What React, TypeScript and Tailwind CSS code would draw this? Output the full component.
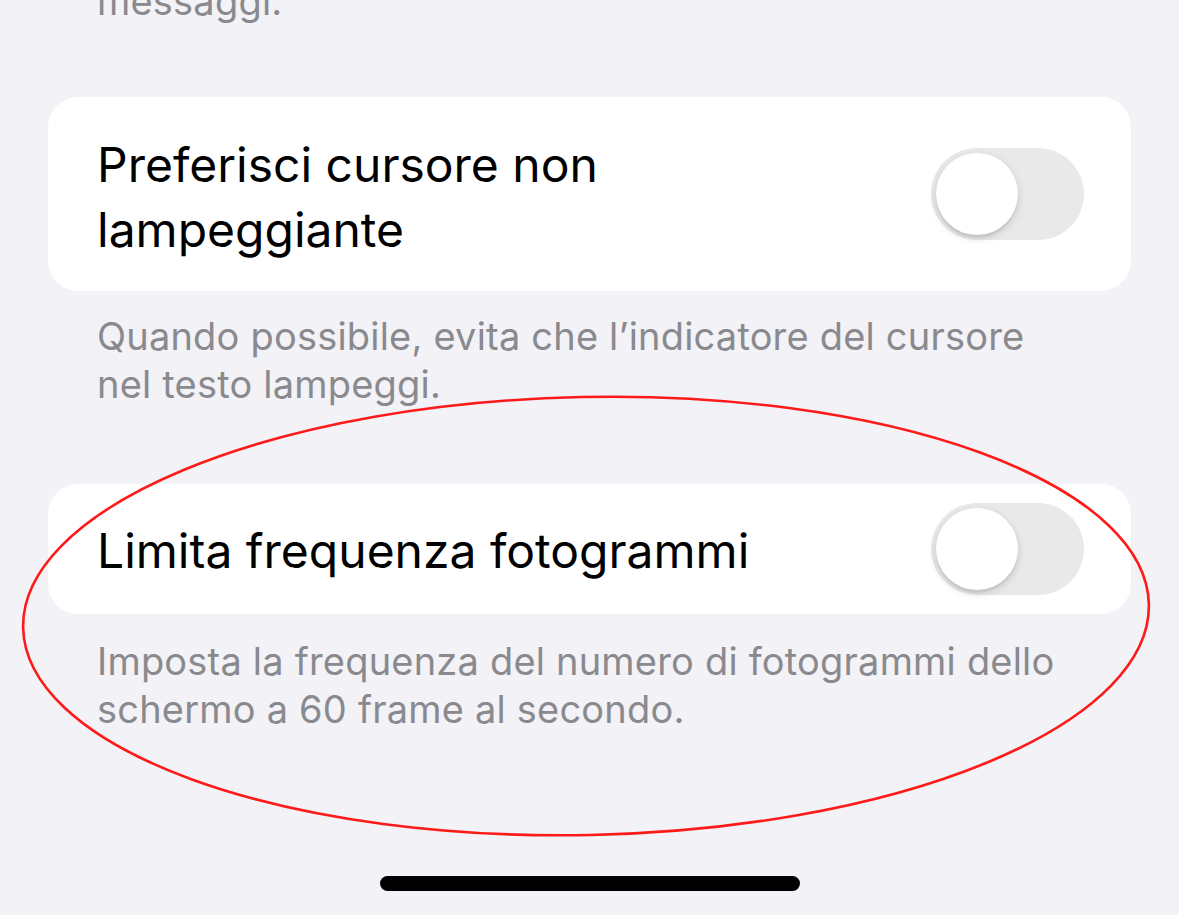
import React from "react";

function Toggle() {
  return (
    <div className="relative w-[153px] h-[92px] shrink-0 rounded-full bg-[#e9e9ea]">
      <div className="absolute left-[5px] top-[5px] w-[82px] h-[82px] rounded-full bg-white shadow-[0_3px_8px_rgba(0,0,0,0.15),0_3px_1px_rgba(0,0,0,0.06)]" />
    </div>
  );
}

function Footer({ children, className = "" }: { children: React.ReactNode; className?: string }) {
  return (
    <p className={`px-[97px] text-[38px] leading-[48px] tracking-[0.2px] text-[#8a8a8e] ${className}`}>
      {children}
    </p>
  );
}

export default function App() {
  return (
    <div
      className="relative w-[1179px] h-[915px] overflow-hidden bg-[#f2f2f7]"
      style={{ fontFamily: "Inter, 'Noto Sans', sans-serif" }}
    >
      <div className="flex flex-col">
        <Footer className="-mt-[23px]">messaggi.</Footer>

        <div className="mx-[48px] mt-[72px] h-[194px] rounded-[30px] bg-white pl-[49px] pr-[47px] flex items-center justify-between">
          <div className="text-[48px] leading-[65px] text-black pt-[6px]">
            Preferisci cursore non
            <br />
            lampeggiante
          </div>
          <Toggle />
        </div>

        <Footer className="mt-[21px]">
          Quando possibile, evita che l’indicatore del cursore
          <br />
          nel testo lampeggi.
        </Footer>

        <div className="mx-[48px] mt-[76px] h-[130px] rounded-[30px] bg-white pl-[49px] pr-[47px] flex items-center justify-between">
          <div className="text-[48px] leading-[65px] text-black pt-[2px]">Limita frequenza fotogrammi</div>
          <Toggle />
        </div>

        <Footer className="mt-[23px] leading-[46px]">
          Imposta la frequenza del numero di fotogrammi dello
          <br />
          schermo a 60 frame al secondo.
        </Footer>
      </div>

      {/* home indicator */}
      <div className="absolute left-[380px] top-[876px] w-[420px] h-[15px] rounded-full bg-black" />

      {/* hand-drawn highlight ring */}
      <svg className="absolute inset-0 pointer-events-none" width="1179" height="915" viewBox="0 0 1179 915">
        <ellipse
          cx="586"
          cy="616"
          rx="563"
          ry="219"
          transform="rotate(-1.2 586 616)"
          fill="none"
          stroke="#ff1a1a"
          strokeWidth="2.6"
        />
      </svg>
    </div>
  );
}
